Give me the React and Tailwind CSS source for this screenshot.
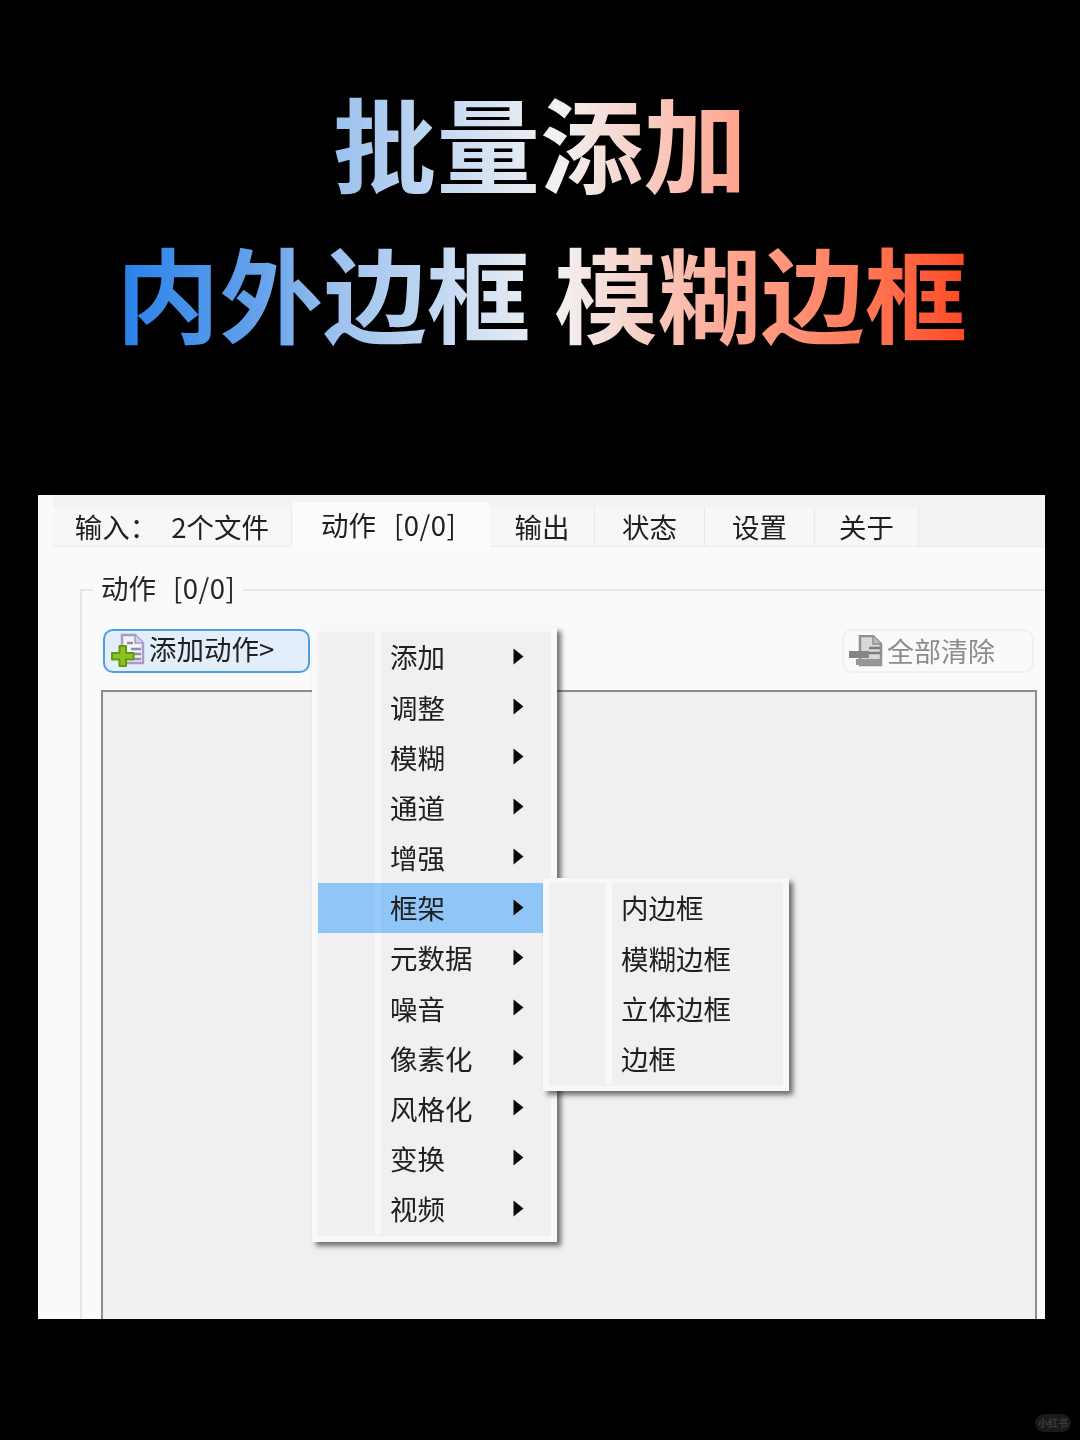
const cjk = { fontFamily: '"Noto Sans CJK SC", sans-serif' };

function Arrow() {
  return (
    <svg width="11" height="17" viewBox="0 0 11 17" className="shrink-0">
      <polygon points="0.5,0.5 10.5,8.5 0.5,16.5" fill="#0a0a0a" />
    </svg>
  );
}

function AddIcon() {
  return (
    <svg width="40" height="36" viewBox="0 0 40 36" className="shrink-0">
      <path d="M13 2h13l8 8v20H13z" fill="#f2f2fa" stroke="#a79cc9" strokeWidth="2.5" />
      <path d="M26 2v8h8" fill="#d6d2ea" stroke="#a79cc9" strokeWidth="1.5" />
      <path d="M18 10h6M22 16h10M22 21h10M22 26h10" stroke="#8f8fa8" strokeWidth="2.5" />
      <path d="M10.5 13h6.5v7h7.5v6.5H17V33h-6.5v-6.5H3V20h7.5z" fill="#8ec21f" stroke="#5f9a12" strokeWidth="2" strokeLinejoin="round" />
    </svg>
  );
}

function ClearIcon() {
  return (
    <svg width="36" height="32" viewBox="0 0 36 32" className="shrink-0">
      <path d="M12 1h13l8 8v21H12z" fill="#d8d8d8" stroke="#8f8f8f" strokeWidth="2.5" />
      <path d="M25 1v8h8" fill="#bcbcbc" stroke="#8f8f8f" strokeWidth="1.5" />
      <path d="M21 13h11M21 18h11" stroke="#7c7c7c" strokeWidth="2.5" />
      <path d="M1 16h20v7H1z" fill="#858585" />
      <path d="M8 24h25v6H8z" fill="#969696" />
    </svg>
  );
}

function MenuRow({ label, arrow, active }) {
  return (
    <div className={`flex h-[50.2px] items-center ${active ? "bg-[#8fc6f7]" : ""}`}>
      <div className="w-[57px] shrink-0" />
      <div className={`h-full w-[6px] shrink-0 ${active ? "bg-[#97caf7]" : "bg-[#f8f8f8]"}`} />
      <div className="flex flex-1 items-center pl-[9px] pr-[27px]">
        <span className="flex-1 whitespace-nowrap text-[27.5px] leading-none text-[#202020]">{label}</span>
        {arrow && <div className="-translate-y-[1px]"><Arrow /></div>}
      </div>
    </div>
  );
}

function Tab({ w, children }) {
  return (
    <div className={`flex h-[39px] shrink-0 items-center justify-center border-r border-[#e9e9e9] bg-[#f7f7f7] text-[27.5px] text-[#1f1f1f] ${w}`}>
      {children}
    </div>
  );
}

export default function App() {
  const items = ["添加", "调整", "模糊", "通道", "增强", "框架", "元数据", "噪音", "像素化", "风格化", "变换", "视频"];
  const sub = ["内边框", "模糊边框", "立体边框", "边框"];
  return (
    <div className="relative h-[1440px] w-[1080px] overflow-hidden bg-black" style={cjk}>
      <div className="flex justify-center pt-[66px]">
        <div className="w-[848px] bg-[linear-gradient(90deg,#2580ea_0%,#6aa5ea_18%,#9cc2ee_26%,#c9dcf2_40%,#f2f2f2_52%,#f8c9bd_64%,#ffa590_73%,#ff7a58_88%,#ff4a26_100%)] bg-clip-text text-center text-[103.6px] font-bold leading-[150px] text-transparent">
          <div className="whitespace-nowrap">批量添加</div>
          <div className="whitespace-nowrap">内外边框 模糊边框</div>
        </div>
      </div>

      <div className="relative mx-[38px] mt-[129px] h-[824px] w-[1007px] overflow-hidden bg-[#fafafa] blur-[0.4px]">
        <div className="ml-[15px] flex h-[52px] items-end border-b border-[#ececec] bg-[#f2f2f2]">
          <Tab w="w-[239px]">
            <span className="whitespace-nowrap">输入：<span className="ml-[14px]">2个文件</span></span>
          </Tab>
          <div className="-mb-px flex h-[45px] w-[198px] shrink-0 items-center rounded-t-sm bg-[#fbfbfb] pl-[29px] text-[27.5px] text-[#1f1f1f]">
            <span className="whitespace-nowrap">动作<span className="ml-[18px] tracking-[0.5px]">[0/0]</span></span>
          </div>
          <Tab w="w-[105px]">输出</Tab>
          <Tab w="w-[110px]">状态</Tab>
          <Tab w="w-[110px]">设置</Tab>
          <Tab w="w-[104px]">关于</Tab>
        </div>

        <div className="pl-[42px] pt-[25px]">
          <fieldset className="border-l-2 border-t-2 border-[#e6e6e6] pl-[19px] pr-[8px] pt-[21px]">
            <legend className="-ml-[8px] h-[36px] px-[8px] text-[27.5px] leading-[31px] text-[#262626]">
              动作<span className="ml-[17px] tracking-[0.5px]">[0/0]</span>
            </legend>
            <div className="flex h-[44px] items-stretch justify-between pl-[2px] pr-[3px]">
              <div className="flex w-[207px] items-center rounded-[10px] border-2 border-[#4b9fe0] bg-[#e2eefa] pl-[4px] text-[27.5px] text-[#202020]">
                <AddIcon />
                <span className="-translate-y-[2px] whitespace-nowrap">添加动作&gt;</span>
              </div>
              <div className="flex w-[192px] items-center rounded-[10px] border-2 border-[#f0f0f0] pl-[4px] text-[27px] text-[#8c8c8c]">
                <ClearIcon />
                <span className="ml-[3px] whitespace-nowrap">全部清除</span>
              </div>
            </div>
            <div className="mt-[17px] h-[660px] border-2 border-[#8c8c8c] bg-[#f0f0f0]" />
          </fieldset>
        </div>

        <div className="absolute left-[274px] top-[132px] w-[245px] border-x-[6px] border-b-[6px] border-t-[5px] border-[#f8f8f8] bg-[#f0f0f0] pb-[2px] shadow-[4px_4px_5px_rgba(0,0,0,0.55)]">
          {items.map((it) => (
            <MenuRow key={it} label={it} arrow active={it === "框架"} />
          ))}
        </div>

        <div className="absolute left-[505px] top-[383px] w-[246px] border-x-[6px] border-b-[5px] border-t-[5px] border-[#f8f8f8] bg-[#f0f0f0] pb-[2px] shadow-[4px_4px_5px_rgba(0,0,0,0.55)]">
          {sub.map((it) => (
            <MenuRow key={it} label={it} />
          ))}
        </div>
      </div>

      <div className="absolute left-[1035px] top-[1414px] flex h-[18px] w-[36px] items-center justify-center rounded-full bg-[#1a1a1a] text-[10px] font-bold leading-none text-[#3a3a3a]">
        小红书
      </div>
    </div>
  );
}
